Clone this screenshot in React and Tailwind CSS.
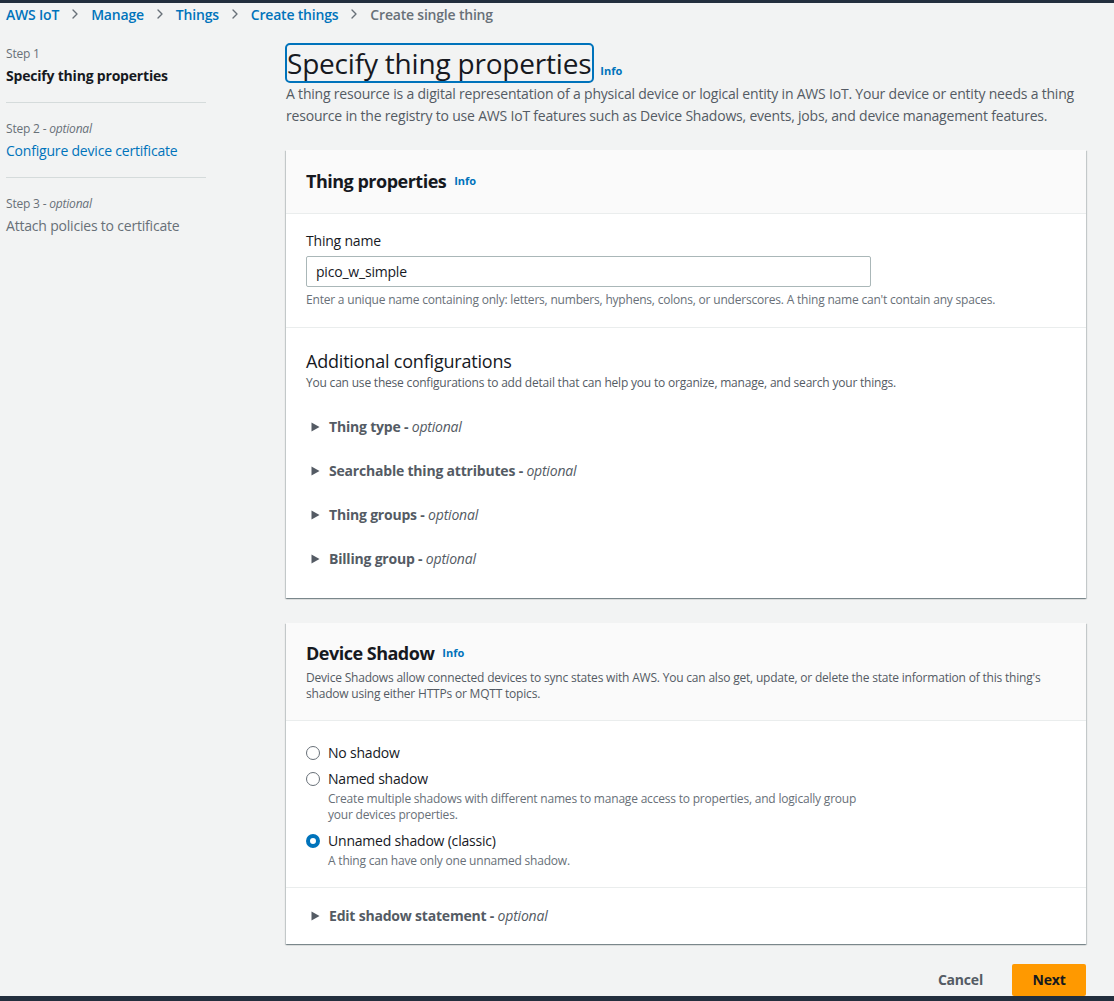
import React from 'react'
import { ChevronRight } from 'lucide-react'

const font = { fontFamily: '"Open Sans", "Noto Sans", Arial, sans-serif' }

const cardShadow = 'bg-white shadow-[0_1px_1px_0_rgba(0,28,36,0.3),1px_1px_1px_0_rgba(0,28,36,0.15),-1px_1px_1px_0_rgba(0,28,36,0.15)]'

function Caret() {
  return (
    <svg width="9" height="10" viewBox="0 0 9 10" className="shrink-0">
      <path d="M0.5 0.5 L8.5 5 L0.5 9.5 Z" fill="#545b64" />
    </svg>
  )
}

function Expander({ label }) {
  return (
    <div className="flex items-center gap-[9px] h-[44px] pl-[5px]">
      <Caret />
      <span className="text-[14px] font-bold text-[#545b64]">
        {label} - <span className="font-normal italic">optional</span>
      </span>
    </div>
  )
}

function Info() {
  return <span className="text-[11px] font-bold tracking-normal text-[#0073bb] ml-[8px]">Info</span>
}

function Radio({ checked, label, desc, className }) {
  return (
    <div className={`flex gap-[8px] ${className || ''}`}>
      <div className="pt-[3px]">
        {checked ? (
          <div className="w-[14px] h-[14px] rounded-full border-[4px] border-[#0073bb] bg-white" />
        ) : (
          <div className="w-[14px] h-[14px] rounded-full border border-[#687078] bg-white" />
        )}
      </div>
      <div>
        <div className="text-[14px] leading-[20px] text-[#16191f]">{label}</div>
        {desc && <div className="mt-[2px] text-[12px] leading-[16px] text-[#687078] max-w-[540px]">{desc}</div>}
      </div>
    </div>
  )
}

export default function App() {
  return (
    <div style={font} className="bg-[#f2f3f3] w-[1114px] h-[1001px] overflow-hidden flex flex-col tracking-[-0.2px]">
      <div className="h-[3px] bg-[#232f3e]" />
      <div className="flex-1 px-[6px]">
        <div className="flex items-center gap-[8px] h-[23px] text-[14px] font-semibold">
          <span className="text-[#0073bb]">AWS IoT</span>
          <ChevronRight className="w-[16px] h-[16px] text-[#687078]" strokeWidth={2} />
          <span className="text-[#0073bb]">Manage</span>
          <ChevronRight className="w-[16px] h-[16px] text-[#687078]" strokeWidth={2} />
          <span className="text-[#0073bb]">Things</span>
          <ChevronRight className="w-[16px] h-[16px] text-[#687078]" strokeWidth={2} />
          <span className="text-[#0073bb]">Create things</span>
          <ChevronRight className="w-[16px] h-[16px] text-[#687078]" strokeWidth={2} />
          <span className="text-[#687078]">Create single thing</span>
        </div>

        <div className="flex gap-[80px] mt-[17px]">
          <div className="w-[200px] shrink-0">
            <div className="text-[12px] leading-[20px] text-[#687078] pt-[1px]">Step 1</div>
            <div className="text-[14px] leading-[24px] font-bold text-[#16191f]">Specify thing properties</div>
            <div className="border-t border-[#d5dbdb] mt-[14px] mb-[16px]" />
            <div className="text-[12px] leading-[20px] text-[#687078]">Step 2 - <span className="italic">optional</span></div>
            <div className="text-[14px] leading-[24px] text-[#0073bb]">Configure device certificate</div>
            <div className="border-t border-[#d5dbdb] mt-[14px] mb-[16px]" />
            <div className="text-[12px] leading-[20px] text-[#687078]">Step 3 - <span className="italic">optional</span></div>
            <div className="text-[14px] leading-[24px] text-[#687078]">Attach policies to certificate</div>
          </div>

          <div className="w-[800px]">
            <div className="flex items-end">
              <h1 className="text-[28px] leading-[36px] text-[#16191f] border-2 border-[#0073bb] rounded-[5px] -ml-[1px] pr-[1px]">
                Specify thing properties
              </h1>
              <span className="mb-[2px] ml-[-2px]"><Info /></span>
            </div>
            <p className="text-[14px] leading-[22px] text-[#545b64]">
              A thing resource is a digital representation of a physical device or logical entity in AWS IoT. Your device or entity needs a thing resource in the registry to use AWS IoT features such as Device Shadows, events, jobs, and device management features.
            </p>

            <div className={`mt-[23px] ${cardShadow}`}>
              <div className="bg-[#fafafa] border-b border-[#eaeded] h-[64px] px-[20px] flex items-center">
                <span className="text-[18px] font-bold text-[#16191f] tracking-[-0.5px]">Thing properties</span>
                <Info />
              </div>
              <div className="px-[20px] pt-[16px] pb-[19px] border-b border-[#eaeded]">
                <div className="text-[14px] leading-[22px] text-[#16191f]">Thing name</div>
                <div className="mt-[4px] w-[565px] h-[31px] border border-[#aab7b8] rounded-[2px] px-[9px] flex items-center text-[14px] text-[#16191f]">pico_w_simple</div>
                <div className="mt-[5px] text-[12px] leading-[16px] text-[#687078]">
                  Enter a unique name containing only: letters, numbers, hyphens, colons, or underscores. A thing name can't contain any spaces.
                </div>
              </div>
              <div className="px-[20px] pt-[20px] pb-[17px]">
                <div className="text-[18px] leading-[26px] text-[#16191f]">Additional configurations</div>
                <div className="mt-[1px] text-[12px] leading-[16px] text-[#545b64]">
                  You can use these configurations to add detail that can help you to organize, manage, and search your things.
                </div>
                <div className="mt-[14px]">
                  <Expander label="Thing type" />
                  <Expander label="Searchable thing attributes" />
                  <Expander label="Thing groups" />
                  <Expander label="Billing group" />
                </div>
              </div>
            </div>

            <div className={`mt-[25px] ${cardShadow}`}>
              <div className="bg-[#fafafa] border-b border-[#eaeded] px-[20px] pt-[18px] pb-[18px]">
                <div className="flex items-center h-[26px]">
                  <span className="text-[18px] font-bold text-[#16191f] tracking-[-0.5px]">Device Shadow</span>
                  <Info />
                </div>
                <div className="text-[12px] leading-[16px] text-[#545b64] mt-[3px]">
                  Device Shadows allow connected devices to sync states with AWS. You can also get, update, or delete the state information of this thing's shadow using either HTTPs or MQTT topics.
                </div>
              </div>
              <div className="px-[20px] pt-[22px] pb-[18px] border-b border-[#eaeded] flex flex-col gap-[6px]">
                <Radio label="No shadow" />
                <Radio label="Named shadow" desc="Create multiple shadows with different names to manage access to properties, and logically group your devices properties." className="mb-[2px]" />
                <Radio checked label="Unnamed shadow (classic)" desc="A thing can have only one unnamed shadow." />
              </div>
              <div className="px-[20px] py-[6px]">
                <Expander label="Edit shadow statement" />
              </div>
            </div>

            <div className="flex justify-end items-center gap-[29px] mt-[20px]">
              <span className="text-[14px] font-bold text-[#545b64]">Cancel</span>
              <span className="bg-[#ff9900] text-[14px] font-bold text-[#16191f] w-[74px] h-[32px] flex items-center justify-center rounded-[2px]">Next</span>
            </div>
          </div>
        </div>
      </div>
      <div className="h-[6px] bg-[#232f3e]" />
    </div>
  )
}
